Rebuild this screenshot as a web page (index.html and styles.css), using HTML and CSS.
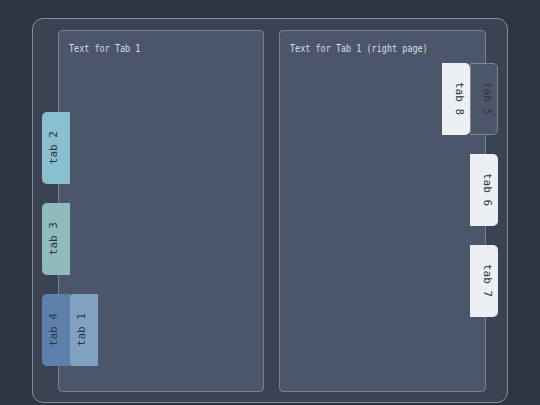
FILE: index.html
```html
<!DOCTYPE html>
<html lang="en">
<head>
<meta charset="utf-8">
<title>Tabbed book</title>
<link rel="stylesheet" href="styles.css">
</head>
<body>
<div class="book">
  <section class="page page-left">
    <p class="page-text"><span>Text for Tab 1</span></p>
  </section>
  <section class="page page-right">
    <p class="page-text"><span>Text for Tab 1 (right page)</span></p>
  </section>

  <nav class="strip strip-left">
    <div class="tab-row">
      <div class="tab tab-l frost-2"><span>tab 2</span></div>
    </div>
    <div class="tab-row">
      <div class="tab tab-l frost-1"><span>tab 3</span></div>
    </div>
    <div class="tab-row">
      <div class="tab tab-l frost-4"><span>tab 4</span></div>
      <div class="tab tab-l frost-3 active"><span>tab 1</span></div>
    </div>
  </nav>

  <nav class="strip strip-right">
    <div class="tab-row">
      <div class="tab tab-r snow"><span>tab 8</span></div>
      <div class="tab tab-r dim"><span>tab 5</span></div>
    </div>
    <div class="tab-row">
      <div class="tab tab-r snow"><span>tab 6</span></div>
    </div>
    <div class="tab-row">
      <div class="tab tab-r snow"><span>tab 7</span></div>
    </div>
  </nav>
</div>
</body>
</html>
```
FILE: styles.css
```css
html, body {
  margin: 0;
  height: 100%;
}

body {
  background: #2e3440;
  padding: 18px 0 0 32px;
  box-sizing: border-box;
}

.book {
  position: relative;
  width: 476px;
  height: 385px;
  box-sizing: border-box;
  border: 1px solid #858e9f;
  border-radius: 11px;
  background: #3b4252;
  padding: 11px 21px 10px 25px;
  display: flex;
  gap: 15px;
}

.page {
  box-sizing: border-box;
  border: 1px solid #71819e;
  border-radius: 4px;
  background: #4c566a;
  padding: 11px 10px;
}

.page-left {
  flex: 0 0 206px;
}

.page-right {
  flex: 1 1 auto;
}

.page-text {
  margin: 0;
  font-family: "DejaVu Sans Mono", "Liberation Mono", monospace;
  font-size: 11px;
  line-height: 13px;
  color: #d8dee9;
  white-space: nowrap;
}

.page-text span {
  display: inline-block;
  transform: scaleX(0.77);
  transform-origin: 0 0;
}

.strip {
  position: absolute;
  display: flex;
  flex-direction: column;
  gap: 19px;
}

.strip-left {
  left: 9px;
  top: 93px;
}

.strip-right {
  right: 9px;
  top: 44px;
  align-items: flex-end;
}

.tab-row {
  display: flex;
}

.tab {
  width: 28px;
  height: 72px;
  box-sizing: border-box;
  display: flex;
  align-items: center;
  justify-content: center;
  font-family: "DejaVu Sans Mono", "Liberation Mono", monospace;
  font-size: 11px;
  color: #2e3440;
}

.tab span {
  writing-mode: vertical-rl;
  line-height: 13px;
  white-space: nowrap;
}

.tab-l {
  border-radius: 5px 0 0 5px;
  padding-right: 6px;
}

.tab-l span {
  transform: rotate(180deg);
}

.tab-r {
  border-radius: 0 5px 5px 0;
  padding-left: 7px;
}

.frost-1 { background: #8fbcbb; }
.frost-2 { background: #88c0d0; }
.frost-3 { background: #81a1c1; }
.frost-4 { background: #5e81ac; }

.active {
  border-radius: 3px 0 0 3px;
}

.snow { background: #eceff4; }

.dim {
  background: #4c566a;
  border: 1px solid #7886a2;
}
```
